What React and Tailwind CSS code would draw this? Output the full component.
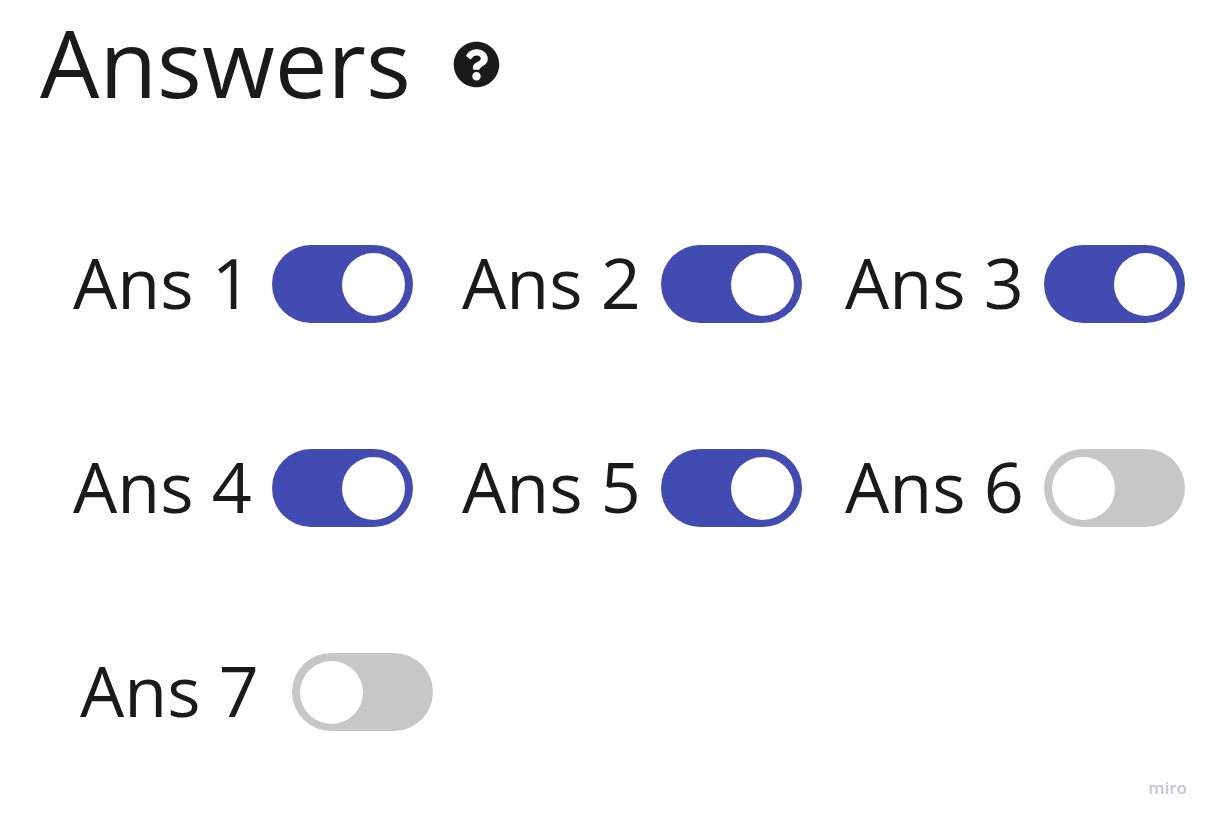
import { useState } from 'react';
import { FaQuestionCircle } from 'react-icons/fa';

const initialAnswers = [
  { id: 1, on: true },
  { id: 2, on: true },
  { id: 3, on: true },
  { id: 4, on: true },
  { id: 5, on: true },
  { id: 6, on: false },
  { id: 7, on: false, inset: true },
];

function AnswerToggle({ answer, onToggle }) {
  const inputId = `answer-${answer.id}`;
  return (
    <div className={answer.inset ? 'flex items-start gap-[33px] pl-[7px]' : 'flex items-start gap-5'}>
      <label htmlFor={inputId} className="text-[70px] leading-[74px] whitespace-nowrap">
        Ans {answer.id}
      </label>
      <input
        id={inputId}
        type="checkbox"
        role="switch"
        checked={answer.on}
        onChange={() => onToggle(answer.id)}
        className="flex h-[78px] w-[141px] shrink-0 cursor-pointer appearance-none items-center rounded-full bg-[#c7c7c7] px-2 before:block before:size-[63px] before:rounded-full before:bg-white before:content-[''] checked:justify-end checked:bg-[#424bb2]"
      />
    </div>
  );
}

export default function App() {
  const [answers, setAnswers] = useState(initialAnswers);
  const toggle = (id) =>
    setAnswers((list) => list.map((a) => (a.id === id ? { ...a, on: !a.on } : a)));

  return (
    <div className="flex min-h-screen flex-col bg-white font-['Open_Sans',sans-serif] text-[#1a1a1a]">
      <header className="flex items-center gap-[42px] pl-10">
        <h1 className="text-[94px] leading-[124px]">Answers</h1>
        <button type="button" aria-label="Help" className="mt-1 cursor-pointer">
          <FaQuestionCircle size={47} />
        </button>
      </header>
      <main className="mt-[121px] grid grid-cols-[389fr_383fr_340fr] gap-y-[126px] pr-[30px] pl-[73px]">
        {answers.map((answer) => (
          <AnswerToggle key={answer.id} answer={answer} onToggle={toggle} />
        ))}
      </main>
      <footer className="mt-auto flex justify-end pr-7 pb-6">
        <span className="text-[17px] leading-5 font-semibold text-[#c6c6d2]">miro</span>
      </footer>
    </div>
  );
}
